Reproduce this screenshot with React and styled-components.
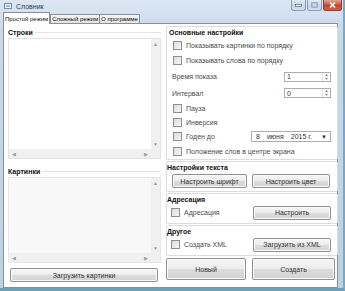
import React from "react";
import styled, { createGlobalStyle } from "styled-components";

const GlobalStyle = createGlobalStyle`
  html, body {
    margin: 0;
    padding: 0;
    background: #ffffff;
  }
  body {
    font-family: "Liberation Sans", Arial, sans-serif;
    font-size: 7px;
    color: #1e1e1e;
  }
`;

// Window frame
const Window = styled.div`
  width: 345px;
  height: 291px;
  box-sizing: border-box;
  background: linear-gradient(#dce7f4, #c9d9ec 30px, #bcd0e6);
  border-bottom: 3px solid #6e9fb8;
  border-right: 2px solid #7ba7c0;
  display: flex;
  flex-direction: column;
  overflow: hidden;
`;

const TitleBar = styled.header`
  height: 12px;
  display: flex;
  align-items: center;
  padding-left: 4px;
  gap: 3px;
`;

const Title = styled.span`
  font-size: 7px;
  color: #2b3a4c;
  flex: 1;
`;

const WinButtons = styled.div`
  display: flex;
  align-self: flex-start;
  gap: 1px;
  margin-right: 1px;
`;

const WinButton = styled.div`
  width: ${(p) => (p.$close ? "19px" : "15px")};
  height: 11px;
  border: 1px solid ${(p) => (p.$close ? "#8d3b33" : "#8a9cb3")};
  border-top: none;
  border-radius: 0 0 3px 3px;
  background: ${(p) =>
    p.$close
      ? "linear-gradient(#e8a393, #c8442f 55%, #d6604a)"
      : "linear-gradient(#e3ebf5, #c7d6e8 55%, #d3e0ef)"};
  display: flex;
  align-items: center;
  justify-content: center;
  box-sizing: border-box;
`;

const TabStrip = styled.nav`
  display: flex;
  align-items: flex-end;
  padding-left: 3px;
  height: 12px;
`;

const Tab = styled.div`
  height: ${(p) => (p.$active ? "12px" : "10px")};
  box-sizing: border-box;
  padding: 0 1px;
  display: flex;
  align-items: center;
  background: ${(p) => (p.$active ? "#ffffff" : "linear-gradient(#f4f4f4, #e3e3e3)")};
  border: 1px solid #8c8e94;
  border-bottom: ${(p) => (p.$active ? "none" : "1px solid #8c8e94")};
  margin-right: ${(p) => (p.$active ? "0" : "-1px")};
  font-size: 6px;
  color: #111;
  white-space: nowrap;
  position: relative;
  z-index: ${(p) => (p.$active ? 1 : 0)};
`;

const TabPage = styled.main`
  flex: 1;
  margin: -1px 5px 0 3px;
  background: #ffffff;
  border: 1px solid #8c8e94;
  display: grid;
  grid-template-columns: 156px 172px;
  column-gap: 4px;
  padding: 2px 0 3px 2px;
  min-height: 0;
`;

const Column = styled.section`
  display: flex;
  flex-direction: column;
  min-height: 0;
`;

// Group boxes
const Group = styled.div`
  border: 1px solid ${(p) => (p.$plain ? "transparent" : "#dcdcdc")};
  border-radius: 2px;
  padding: ${(p) => p.$pad || "2px 3px 3px"};
  display: flex;
  flex-direction: column;
  flex: ${(p) => p.$grow || "none"};
  min-height: 0;
  margin-bottom: ${(p) => p.$mb || "0"};
`;

const GroupTitle = styled.div`
  font-weight: bold;
  font-size: 7px;
  color: #111;
  height: 9px;
  line-height: 9px;
  display: flex;
  align-items: center;
  gap: 2px;
  margin-bottom: ${(p) => p.$mb || "1px"};
  &::after {
    content: "";
    flex: 1;
    border-top: 1px solid ${(p) => (p.$line ? "#e2e2e2" : "transparent")};
  }
`;

const ScrollBox = styled.div`
  flex: 1;
  border: 1px solid ${(p) => (p.$gray ? "#e6e6e6" : "#e2e3ea")};
  background: ${(p) => (p.$gray ? "#f8f8f8" : "#ffffff")};
  display: grid;
  grid-template-columns: 1fr 9px;
  grid-template-rows: 1fr 9px;
  min-height: 0;
`;

const VScroll = styled.div`
  background: #f0f0f0;
  display: flex;
  flex-direction: column;
  justify-content: space-between;
  align-items: center;
  font-size: 5px;
  color: #9a9a9a;
  padding: 2px 0;
`;

const HScroll = styled.div`
  background: #f0f0f0;
  display: flex;
  justify-content: space-between;
  align-items: center;
  font-size: 5px;
  color: #9a9a9a;
  padding: 0 3px;
  grid-column: 1 / 2;
`;

const Corner = styled.div`
  background: #f0f0f0;
`;

const Button = styled.button`
  font-family: "Liberation Sans", Arial, sans-serif;
  font-size: 7px;
  color: #333;
  height: ${(p) => p.$h || "14px"};
  width: ${(p) => p.$w || "auto"};
  padding: 0;
  border: 1px solid #8f8f8f;
  border-radius: 2px;
  background: linear-gradient(#f6f6f6, #ececec 50%, #dcdcdc 51%, #d3d3d3);
  box-shadow: inset 0 0 0 1px #fbfbfb;
  flex: ${(p) => p.$flex || "none"};
  margin-right: ${(p) => p.$mr || "0"};
`;

const Row = styled.div`
  display: flex;
  align-items: center;
  height: ${(p) => p.$h || "15px"};
  justify-content: space-between;
  padding-left: ${(p) => p.$pl || "0"};
`;

const CheckLabel = styled.label`
  display: flex;
  align-items: center;
  gap: 4px;
  font-size: 7px;
  color: #4a4a4a;
  padding-left: 4px;
`;

const CheckBox = styled.span`
  width: 7px;
  height: 7px;
  border: 1px solid #8e8f8f;
  background: linear-gradient(135deg, #dcdcdc, #f6f6f6);
  display: inline-block;
`;

const FieldLabel = styled.span`
  font-size: 7px;
  color: #4a4a4a;
  padding-left: 3px;
`;

const Spin = styled.div`
  width: 47px;
  height: 10px;
  border: 1px solid #abadb3;
  background: #fff;
  display: flex;
  align-items: center;
  justify-content: space-between;
  font-size: 7px;
  color: #333;
  padding-left: 2px;
  margin-right: 6px;
  box-sizing: border-box;
`;

const SpinArrows = styled.div`
  width: 7px;
  height: 100%;
  border-left: 1px solid #e2e2e2;
  display: flex;
  flex-direction: column;
  align-items: center;
  justify-content: center;
  font-size: 4px;
  line-height: 4px;
  color: #707070;
`;

const DatePicker = styled.div`
  width: 80px;
  height: 11px;
  border: 1px solid #abadb3;
  box-sizing: border-box;
  background: #fff;
  display: flex;
  align-items: center;
  white-space: nowrap;
  font-size: 7px;
  color: #333;
  padding: 0 3px 0 4px;
  gap: 7px;
  margin-right: 6px;
  & > span:last-child {
    margin-left: auto;
    font-size: 6px;
  }
`;

const ButtonPair = styled.div`
  display: flex;
  gap: 5px;
  padding: 0 6px 0 5px;
`;

const BottomButtons = styled.div`
  display: flex;
  gap: 6px;
  margin-top: 2px;
  padding-right: 3px;
`;

function Scrolled({ gray }) {
  return (
    <ScrollBox $gray={gray}>
      <div />
      <VScroll>
        <span>▲</span>
        <span>▼</span>
      </VScroll>
      <HScroll>
        <span>◀</span>
        <span>▶</span>
      </HScroll>
      <Corner />
    </ScrollBox>
  );
}

function Check({ children }) {
  return (
    <CheckLabel>
      <CheckBox />
      {children}
    </CheckLabel>
  );
}

function SpinField({ value }) {
  return (
    <Spin>
      <span>{value}</span>
      <SpinArrows>
        <span>▲</span>
        <span>▼</span>
      </SpinArrows>
    </Spin>
  );
}

export default function App() {
  return (
    <>
      <GlobalStyle />
      <Window>
        <TitleBar>
          <svg width="9" height="8" viewBox="0 0 9 8">
            <rect x="0.5" y="1.5" width="7" height="5" fill="#f4f4f4" stroke="#7a8ca3" />
            <path d="M2 4 L6 4" stroke="#5a7fb0" />
          </svg>
          <Title>Словник</Title>
          <WinButtons>
            <WinButton>
              <svg width="7" height="4" viewBox="0 0 7 4">
                <rect x="0.5" y="1.5" width="6" height="2" fill="#fff" stroke="#3a4c66" strokeWidth="0.6" />
              </svg>
            </WinButton>
            <WinButton>
              <svg width="7" height="6" viewBox="0 0 7 6">
                <rect x="0.8" y="0.8" width="5.4" height="4.4" fill="none" stroke="#8a9cb3" strokeWidth="1" />
              </svg>
            </WinButton>
            <WinButton $close>
              <svg width="7" height="6" viewBox="0 0 7 6">
                <path d="M1 0.5 L6 5.5 M6 0.5 L1 5.5" stroke="#fff" strokeWidth="1.6" />
              </svg>
            </WinButton>
          </WinButtons>
        </TitleBar>

        <TabStrip>
          <Tab $active>Простой режим</Tab>
          <Tab>Сложный режим</Tab>
          <Tab>О программе</Tab>
        </TabStrip>

        <TabPage>
          {/* Left column */}
          <Column>
            <Group $plain $grow="0 0 131px" $pad="1px 0 2px 1px">
              <GroupTitle $line>Строки</GroupTitle>
              <Scrolled />
            </Group>
            <Group $plain $grow="1" $pad="4px 0 2px 1px">
              <GroupTitle $line>Картинки</GroupTitle>
              <Scrolled gray />
            </Group>
            <Row $h="18px" $pl="4px">
              <Button $w="148px" $h="14px">Загрузить картинки</Button>
            </Row>
          </Column>

          {/* Right column */}
          <Column>
            <Group $pad="1px 0 0 2px" $mb="1px">
              <GroupTitle $mb="1px">Основные настройки</GroupTitle>
              <Row $h="15px"><Check>Показывать картинки по порядку</Check></Row>
              <Row $h="15px"><Check>Показывать слова по порядку</Check></Row>
              <Row $h="17px">
                <FieldLabel>Время показа</FieldLabel>
                <SpinField value="1" />
              </Row>
              <Row $h="16px">
                <FieldLabel>Интервал</FieldLabel>
                <SpinField value="0" />
              </Row>
              <Row $h="14px"><Check>Пауза</Check></Row>
              <Row $h="14px"><Check>Инверсия</Check></Row>
              <Row $h="15px">
                <Check>Годен до</Check>
                <DatePicker>
                  <span>8</span>
                  <span>июня</span>
                  <span>2015 г.</span>
                  <span>▼</span>
                </DatePicker>
              </Row>
              <Row $h="15px"><Check>Положение слов в центре экрана</Check></Row>
            </Group>

            <Group $pad="1px 0 3px 0" $mb="1px">
              <GroupTitle $mb="2px">Настройки текста</GroupTitle>
              <ButtonPair>
                <Button $flex="0 0 75px">Настроить шрифт</Button>
                <Button $flex="0 0 78px">Настроить цвет</Button>
              </ButtonPair>
            </Group>

            <Group $pad="1px 0 2px 0" $mb="1px">
              <GroupTitle $mb="0">Адресация</GroupTitle>
              <Row $h="17px">
                <Check>Адресация</Check>
                <Button $w="78px" $mr="6px">Настроить</Button>
              </Row>
            </Group>

            <Group $pad="1px 0 2px 0">
              <GroupTitle $mb="0">Другое</GroupTitle>
              <Row $h="17px">
                <Check>Создать XML</Check>
                <Button $w="78px" $mr="6px">Загрузить из XML</Button>
              </Row>
            </Group>

            <BottomButtons>
              <Button $h="22px" $flex="0 0 80px">Новый</Button>
              <Button $h="22px" $flex="0 0 83px">Создать</Button>
            </BottomButtons>
          </Column>
        </TabPage>
      </Window>
    </>
  );
}
